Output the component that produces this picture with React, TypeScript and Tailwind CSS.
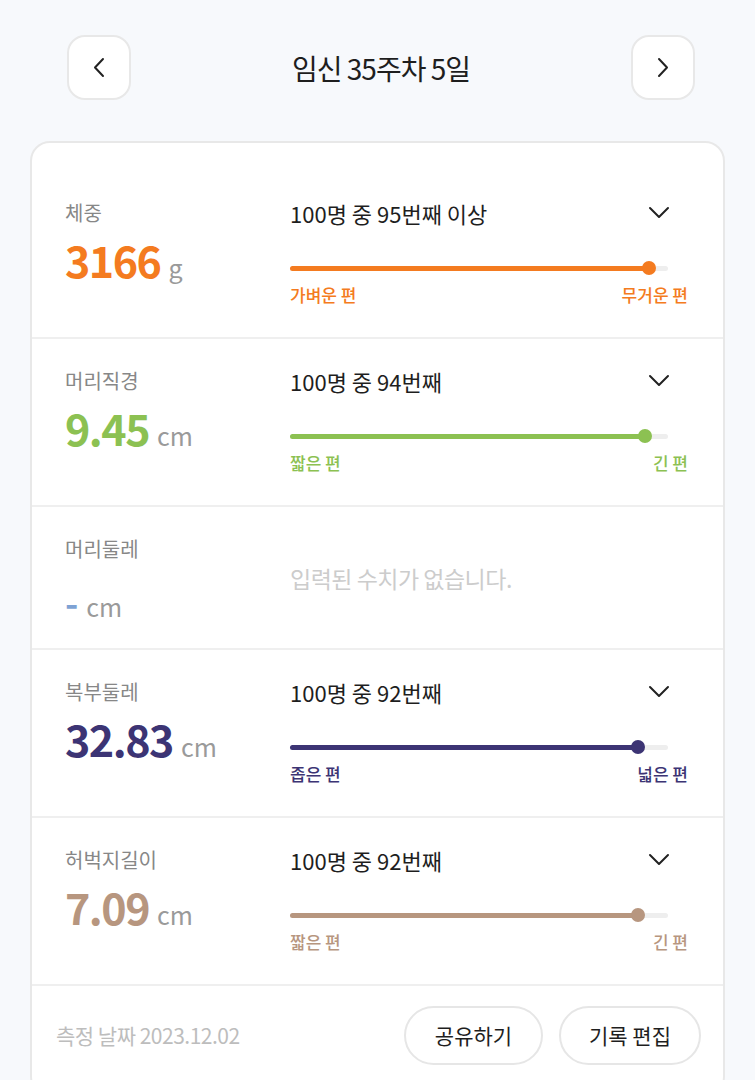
import React from "react";

const FONT = { fontFamily: '"Noto Sans CJK KR", "Noto Sans", sans-serif' };

function Chevron({ dir }: { dir: "left" | "right" | "down" }) {
  if (dir === "down") {
    return (
      <svg width="22" height="14" viewBox="0 0 22 14" fill="none">
        <path d="M2 2 L11 11 L20 2" stroke="#222" strokeWidth="2" strokeLinecap="round" strokeLinejoin="round" />
      </svg>
    );
  }
  const d = dir === "left" ? "M11 2 L3 10.5 L11 19" : "M3 2 L11 10.5 L3 19";
  return (
    <svg width="14" height="21" viewBox="0 0 14 21" fill="none">
      <path d={d} stroke="#222" strokeWidth="2" strokeLinecap="round" strokeLinejoin="round" />
    </svg>
  );
}

type Item = {
  label: string;
  value: string;
  unit: string;
  color: string;
  rank: string;
  pct: number;
  left: string;
  right: string;
};

const items: Item[] = [
  { label: "체중", value: "3166", unit: "g", color: "#f47b20", rank: "100명 중 95번째 이상", pct: 95, left: "가벼운 편", right: "무거운 편" },
  { label: "머리직경", value: "9.45", unit: "cm", color: "#8cc152", rank: "100명 중 94번째", pct: 94, left: "짧은 편", right: "긴 편" },
  { label: "복부둘레", value: "32.83", unit: "cm", color: "#3c3474", rank: "100명 중 92번째", pct: 92, left: "좁은 편", right: "넓은 편" },
  { label: "허벅지길이", value: "7.09", unit: "cm", color: "#b7967f", rank: "100명 중 92번째", pct: 92, left: "짧은 편", right: "긴 편" },
];

function Row({ it }: { it: Item }) {
  return (
    <div className="flex h-[168px] border-b-2 border-[#efefef] pl-[33px] pr-[35px] pt-[28px]">
      <div className="w-[225px] shrink-0">
        <div className="text-[20px] leading-[28px] text-[#878787]">{it.label}</div>
        <div className="mt-[8px] flex items-baseline">
          <span className="text-[43px] font-bold leading-[48px] tracking-[-1.5px]" style={{ color: it.color }}>
            {it.value}
          </span>
          <span className="ml-[8px] text-[25px] text-[#9a9a9a]">{it.unit}</span>
        </div>
      </div>
      <div className="flex-1">
        <div className="flex h-[28px] items-center justify-between">
          <span className="text-[22px] leading-[28px] text-[#1e1e1e]">{it.rank}</span>
          <span className="mr-[18px] flex items-center">
            <Chevron dir="down" />
          </span>
        </div>
        <div className="relative mt-[34px] mr-[20px] h-[14px]">
          <div className="absolute left-0 right-0 top-[5px] h-[5px] rounded-full bg-[#eeeeee]" />
          <div
            className="absolute left-0 top-[5px] h-[5px] rounded-full"
            style={{ width: `${it.pct}%`, backgroundColor: it.color }}
          />
          <div
            className="absolute top-0 h-[14px] w-[14px] -translate-x-1/2 rounded-full"
            style={{ left: `${it.pct}%`, backgroundColor: it.color }}
          />
        </div>
        <div className="mt-[9px] flex justify-between text-[17px] font-medium leading-[22px]" style={{ color: it.color }}>
          <span>{it.left}</span>
          <span>{it.right}</span>
        </div>
      </div>
    </div>
  );
}

export default function App() {
  return (
    <div className="min-h-[1080px] w-[755px] overflow-hidden bg-[#f7f9fc]" style={FONT}>
      <div className="flex items-center justify-between pl-[67px] pr-[60px] pt-[35px]">
        <button className="flex h-[65px] w-[64px] items-center justify-center rounded-[18px] border-2 border-[#e8e8e8] bg-white">
          <Chevron dir="left" />
        </button>
        <div className="text-[28px] tracking-[-1px] text-[#1e1e1e]">임신 35주차 5일</div>
        <button className="flex h-[65px] w-[64px] items-center justify-center rounded-[18px] border-2 border-[#e8e8e8] bg-white">
          <Chevron dir="right" />
        </button>
      </div>

      <div className="ml-[30px] mr-[30px] mt-[41px] rounded-[20px] border-2 border-[#e8e8e8] bg-white pt-[28px]">
        <Row it={items[0]} />
        <Row it={items[1]} />
        <div className="flex h-[143px] border-b-2 border-[#efefef] pl-[33px] pr-[35px] pt-[28px]">
          <div className="w-[225px] shrink-0">
            <div className="text-[20px] leading-[28px] text-[#878787]">머리둘레</div>
            <div className="mt-[14px] flex items-baseline">
              <span className="text-[36px] font-bold leading-[48px] text-[#7ea2d4]">-</span>
              <span className="ml-[8px] text-[25px] text-[#9a9a9a]">cm</span>
            </div>
          </div>
          <div className="flex-1 pt-[26px] text-[23px] tracking-[-0.5px] text-[#cccccc]">입력된 수치가 없습니다.</div>
        </div>
        <Row it={items[2]} />
        <Row it={items[3]} />
        <div className="flex items-center justify-between pb-[30px] pl-[24px] pr-[22px] pt-[20px]">
          <span className="text-[21px] tracking-[-0.5px] text-[#bdbdbd]">측정 날짜 2023.12.02</span>
          <div className="flex gap-[16px]">
            <button className="h-[59px] w-[139px] rounded-full border-2 border-[#e6e6e6] bg-white text-[21px] text-[#1e1e1e]">
              공유하기
            </button>
            <button className="h-[59px] w-[142px] rounded-full border-2 border-[#e6e6e6] bg-white text-[21px] text-[#1e1e1e]">
              기록 편집
            </button>
          </div>
        </div>
      </div>
    </div>
  );
}
